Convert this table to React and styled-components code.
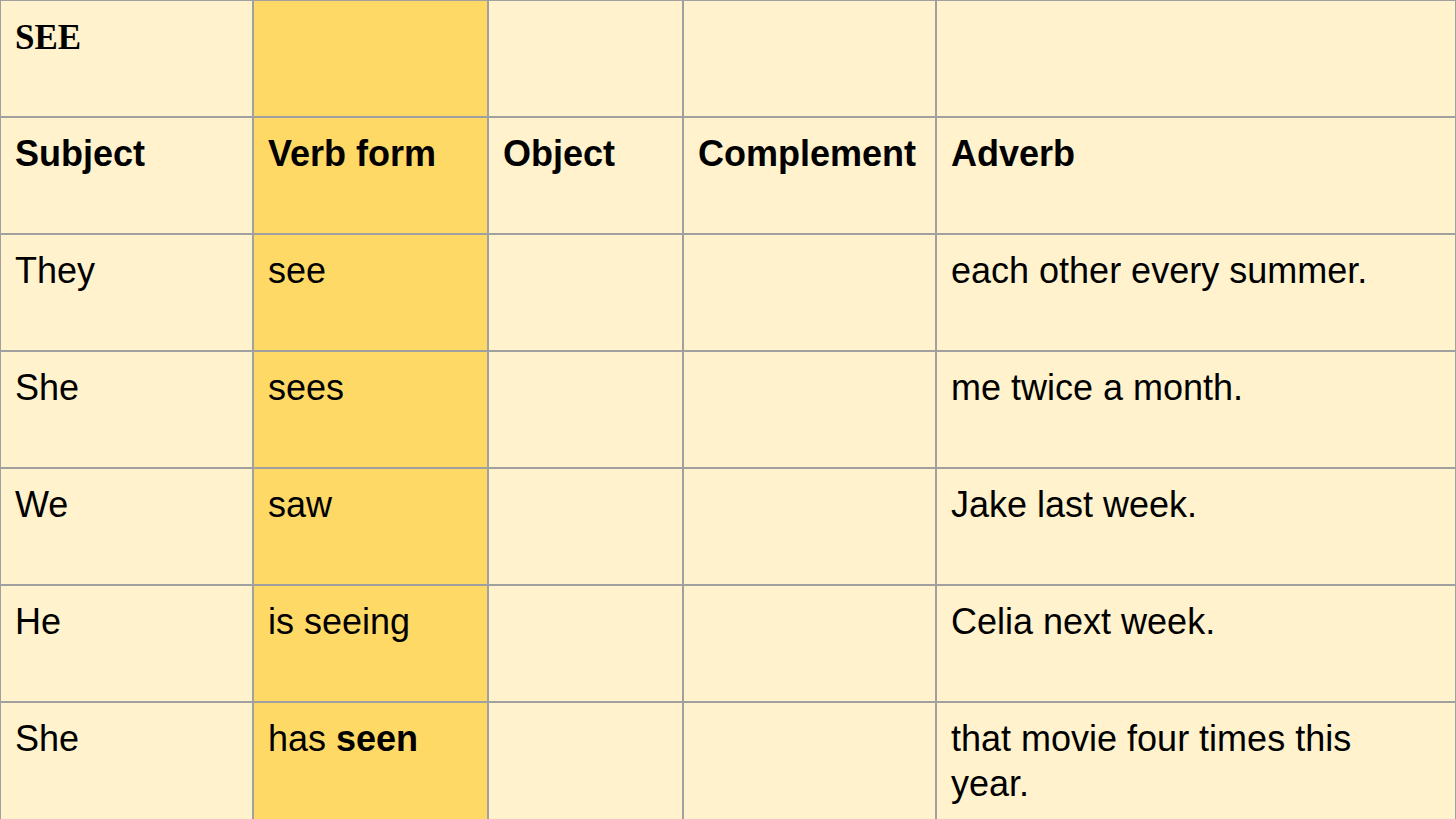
import styled, { createGlobalStyle } from "styled-components";

const GlobalStyle = createGlobalStyle`
  html, body {
    margin: 0;
    padding: 0;
    height: 819px;
    overflow: hidden;
    background: #fff2cc;
  }
`;

const Sheet = styled.div`
  display: grid;
  grid-template-columns: 251px 233px 193px 251px 518px;
  grid-template-rows: repeat(6, 115px) 130px;
  gap: 2px;
  padding: 1px 1px 0 1px;
  width: 1456px;
  box-sizing: border-box;
  background: #a0a0a0;
`;

const Cell = styled.div`
  background: ${(p) => (p.$verb ? "#ffd966" : "#fff2cc")};
  padding: 13px 40px 0 14px;
  font-family: "Liberation Sans", Arial, sans-serif;
  font-size: 36px;
  line-height: 45px;
  font-weight: ${(p) => (p.$bold ? 700 : 400)};
  color: #000;
  overflow: hidden;
  white-space: ${(p) => (p.$bold ? "nowrap" : "normal")};
`;

const Title = styled.div`
  font-family: "Liberation Serif", "Times New Roman", serif;
  font-weight: 700;
  font-size: 35px;
  line-height: 45px;
  margin-top: 1px;
`;

const Strong = styled.b`
  font-weight: 700;
`;

const headers = ["Subject", "Verb form", "Object", "Complement", "Adverb"];

const rows = [
  ["They", "see", "", "", "each other every summer."],
  ["She", "sees", "", "", "me twice a month."],
  ["We", "saw", "", "", "Jake last week."],
  ["He", "is seeing", "", "", "Celia next week."],
  [
    "She",
    <>
      has <Strong>seen</Strong>
    </>,
    "",
    "",
    "that movie four times this year.",
  ],
];

const App = () => {
  return (
    <>
      <GlobalStyle />
      <Sheet>
        <Cell>
          <Title>SEE</Title>
        </Cell>
        <Cell $verb />
        <Cell />
        <Cell />
        <Cell />

        {headers.map((h, i) => (
          <Cell key={h} $verb={i === 1} $bold>
            {h}
          </Cell>
        ))}

        {rows.map((row, r) =>
          row.map((text, c) => (
            <Cell key={`${r}-${c}`} $verb={c === 1}>
              {text}
            </Cell>
          ))
        )}
      </Sheet>
    </>
  );
};

export default App;
